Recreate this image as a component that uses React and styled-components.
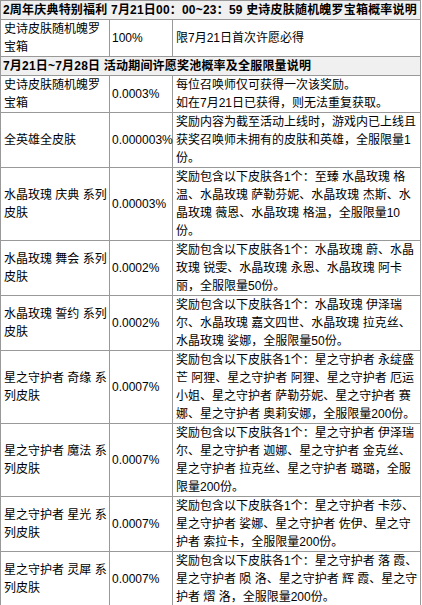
import React from 'react'
import styled, { createGlobalStyle } from 'styled-components'

const GlobalStyle = createGlobalStyle`
  body {
    margin: 0;
    background: #fff;
    font-family: "Liberation Sans", "Noto Sans CJK SC", sans-serif;
    color: #000;
  }
`

const Table = styled.table`
  width: 421px;
  border-collapse: collapse;
  border: 1px solid #666;
  font-size: 12px;
  line-height: 18px;
  table-layout: fixed;
`

const Cell = styled.td`
  border: 1px solid #999;
  padding: ${p => (p.$rate ? '0 0 0 2px' : '0 2px 0 3px')};
  white-space: ${p => (p.$rate ? 'nowrap' : 'normal')};
  vertical-align: middle;
  word-break: break-all;
`

const HeadCell = styled.td`
  border: 1px solid #999;
  padding: 0 2px;
  background: #f0f0f0;
  font-weight: bold;
  letter-spacing: 0.2px;
  white-space: nowrap;
`

const rows = [
  ['史诗皮肤随机魄罗宝箱', '0.0003%', <>每位召唤师仅可获得一次该奖励。<br />如在7月21日已获得，则无法重复获取。</>],
  ['全英雄全皮肤', '0.000003%', '奖励内容为截至活动上线时，游戏内已上线且获奖召唤师未拥有的皮肤和英雄，全服限量1份。'],
  ['水晶玫瑰 庆典 系列皮肤', '0.00003%', '奖励包含以下皮肤各1个：至臻 水晶玫瑰 格温、水晶玫瑰 萨勒芬妮、水晶玫瑰 杰斯、水晶玫瑰 薇恩、水晶玫瑰 格温，全服限量10份。'],
  ['水晶玫瑰 舞会 系列皮肤', '0.0002%', '奖励包含以下皮肤各1个：水晶玫瑰 蔚、水晶玫瑰 锐雯、水晶玫瑰 永恩、水晶玫瑰 阿卡丽，全服限量50份。'],
  ['水晶玫瑰 誓约 系列皮肤', '0.0002%', '奖励包含以下皮肤各1个：水晶玫瑰 伊泽瑞尔、水晶玫瑰 嘉文四世、水晶玫瑰 拉克丝、水晶玫瑰 娑娜，全服限量50份。'],
  ['星之守护者 奇缘 系列皮肤', '0.0007%', '奖励包含以下皮肤各1个：星之守护者 永绽盛芒 阿狸、星之守护者 阿狸、星之守护者 厄运小姐、星之守护者 萨勒芬妮、星之守护者 赛娜、星之守护者 奥莉安娜，全服限量200份。'],
  ['星之守护者 魔法 系列皮肤', '0.0007%', '奖励包含以下皮肤各1个：星之守护者 伊泽瑞尔、星之守护者 迦娜、星之守护者 金克丝、星之守护者 拉克丝、星之守护者 璐璐，全服限量200份。'],
  ['星之守护者 星光 系列皮肤', '0.0007%', '奖励包含以下皮肤各1个：星之守护者 卡莎、星之守护者 娑娜、星之守护者 佐伊、星之守护者 索拉卡，全服限量200份。'],
  ['星之守护者 灵犀 系列皮肤', '0.0007%', '奖励包含以下皮肤各1个：星之守护者 落 霞、星之守护者 陨 洛、星之守护者 辉 霞、星之守护者 熠 洛，全服限量200份。'],
]

export default function App() {
  return (
    <>
      <GlobalStyle />
      <Table>
        <colgroup>
          <col style={{ width: 109 }} />
          <col style={{ width: 63 }} />
          <col />
        </colgroup>
        <tbody>
          <tr>
            <HeadCell colSpan={3}>2周年庆典特别福利 7月21日00：00~23：59 史诗皮肤随机魄罗宝箱概率说明</HeadCell>
          </tr>
          <tr>
            <Cell>史诗皮肤随机魄罗宝箱</Cell>
            <Cell $rate>100%</Cell>
            <Cell>限7月21日首次许愿必得</Cell>
          </tr>
          <tr>
            <HeadCell colSpan={3}>7月21日~7月28日 活动期间许愿奖池概率及全服限量说明</HeadCell>
          </tr>
          {rows.map((r, i) => (
            <tr key={i}>
              <Cell>{r[0]}</Cell>
              <Cell $rate>{r[1]}</Cell>
              <Cell>{r[2]}</Cell>
            </tr>
          ))}
        </tbody>
      </Table>
    </>
  )
}
